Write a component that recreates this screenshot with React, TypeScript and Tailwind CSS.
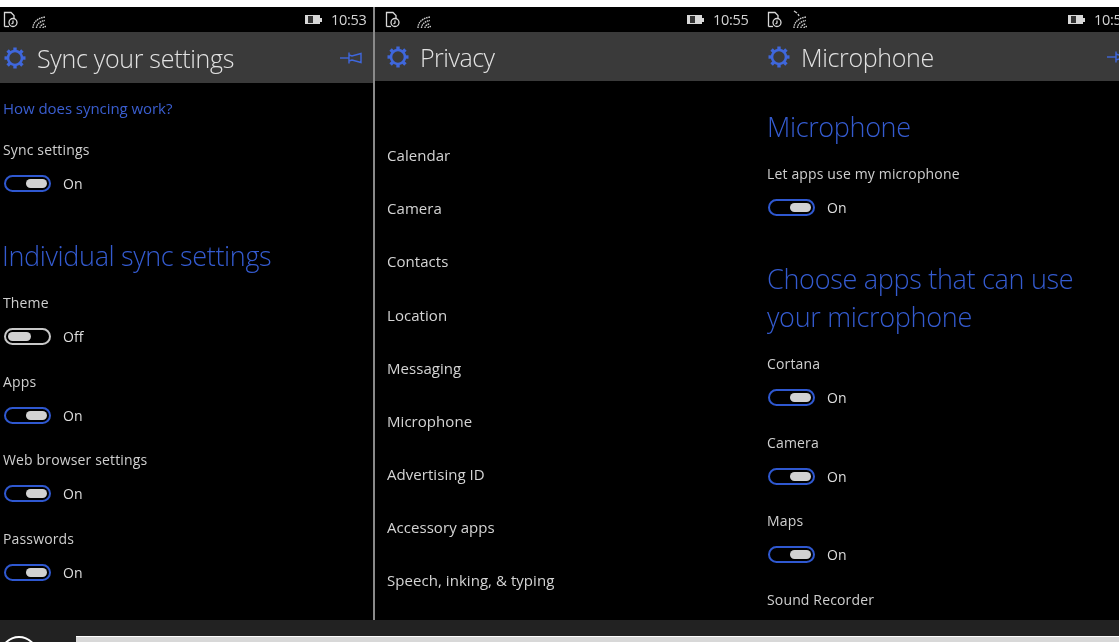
const fontFamily = 'font-["Open_Sans","Liberation_Sans",sans-serif]'

function Gear({ className }: { className?: string }) {
  const teeth = [0, 45, 90, 135, 180, 225, 270, 315]
  return (
    <svg viewBox="0 0 24 24" className={className} fill="none" stroke="#3f67dc">
      <circle cx="12" cy="12" r="7" strokeWidth="2.6" />
      {teeth.map((a) => (
        <line key={a} x1="12" y1="5" x2="12" y2="1.5" strokeWidth="3.4" transform={`rotate(${a} 12 12)`} />
      ))}
    </svg>
  )
}

function Pin({ className }: { className?: string }) {
  return (
    <svg viewBox="0 0 22 14" className={className} fill="none" stroke="#3f67dc" strokeWidth="1.4">
      <path d="M0 7H9" />
      <path d="M9 1.5V12.5M9 4L12 5L21 2.5V11.5L12 9L9 10" />
    </svg>
  )
}

function DocIcon() {
  return (
    <svg viewBox="0 0 16 16" className="h-[17px] w-[16px] shrink-0" fill="none" stroke="#d8d8d8" strokeWidth="1.3">
      <path d="M1.5 15V1H8L11 4V7" />
      <path d="M1.5 15H6" />
      <circle cx="10" cy="11" r="4" />
      <path d="M10 9V11.5L8.5 12.5" />
    </svg>
  )
}

function WifiIcon({ dot }: { dot?: boolean }) {
  return (
    <svg viewBox="0 0 16 20" className="h-5 w-4 shrink-0" fill="none" stroke="#c8c8c8" strokeWidth="1.4" strokeDasharray="1.6 .7">
      <path d="M1 18C1 12 6 8 13 7" />
      <path d="M4.5 18C4.5 14.5 8 11 13 10.5" />
      <path d="M8 18C8 16 10 14 13 14" />
      <path d="M11 18C11 17 12 16.5 14 16.5" />
      {dot && <path d="M1 1L4 3M5 4L6 6" strokeDasharray="none" />}
    </svg>
  )
}

function Battery() {
  return (
    <div className="flex items-center shrink-0">
      <div className="h-[9px] w-[15px] border border-[#d8d8d8] bg-[#d8d8d8] pr-[6px]">
        <div className="ml-auto h-full w-[5px] bg-[#333]" />
      </div>
      <div className="h-[4px] w-[2px] bg-[#d8d8d8]" />
    </div>
  )
}

function StatusBar({ time, wifiGap, dot, docLeft, timeLeft }: { time: string; wifiGap: string; dot?: boolean; docLeft: string; timeLeft: string }) {
  return (
    <div className={`flex h-[25px] items-center ${docLeft} text-[14.5px] text-[#d4d4d4]`}>
      <DocIcon />
      <div className={wifiGap}>
        <WifiIcon dot={dot} />
      </div>
      <div className={`flex items-center gap-[9px] ${timeLeft}`}>
        <Battery />
        <span className="whitespace-nowrap tracking-[-0.3px]">{time}</span>
      </div>
    </div>
  )
}

function Header({ title, pin, height, pad, textClass, pinClass }: { title: string; pin?: boolean; height: string; pad: string; textClass: string; pinClass?: string }) {
  return (
    <div className={`flex ${height} items-center bg-[#3a3a3a] ${pad}`}>
      <Gear className="h-[24px] w-[24px] shrink-0" />
      <span className={`ml-[10px] whitespace-nowrap pt-[3px] text-[#e2e2e2] ${textClass}`}>{title}</span>
      {pin && <Pin className={pinClass} />}
    </div>
  )
}

function Toggle({ on }: { on: boolean }) {
  return (
    <div className="ml-[1px] flex items-center">
      <div className={`flex h-[17px] w-[47px] items-center rounded-full border-2 px-[2px] ${on ? 'justify-end border-[#2f58d0]' : 'border-[#c8c8c8]'}`}>
        <div className={`h-[9px] rounded-full bg-[#d2d2d2] ${on ? 'w-[21px]' : 'w-[23px]'}`} />
      </div>
      <span className="ml-[12px] text-[14px] text-[#dedede]">{on ? 'On' : 'Off'}</span>
    </div>
  )
}

function Setting({ label, on = true, className }: { label: string; on?: boolean; className?: string }) {
  return (
    <div className={className}>
      <div className="h-[20px] text-[14px] leading-[20px] tracking-[0.15px] text-[#cfcfcf]">{label}</div>
      <div className="mt-[13px]">
        <Toggle on={on} />
      </div>
    </div>
  )
}

const privacyItems = ['Calendar', 'Camera', 'Contacts', 'Location', 'Messaging', 'Microphone', 'Advertising ID', 'Accessory apps', 'Speech, inking, & typing']

export default function App() {
  return (
    <div className={`${fontFamily} flex h-[642px] w-[1119px] flex-col overflow-hidden bg-white pt-[7px]`}>
      <div className="flex h-[613px] bg-black blur-[0.5px]">
        {/* sync settings */}
        <div className="w-[373px] shrink-0">
          <StatusBar time="10:53" wifiGap="ml-[13px]" docLeft="pl-[3px]" timeLeft="ml-[257px]" />
          <Header title="Sync your settings" pin height="h-[51px]" pad="pl-[3px]" textClass="text-[25px] font-light tracking-[-0.3px]" pinClass="ml-auto mr-[11px] h-[14px] w-[22px]" />
          <div className="pl-[3px]">
            <div className="mt-[15px] h-[20px] text-[15px] leading-[20px] tracking-[-0.05px] text-[#3a5ed0]">How does syncing work?</div>
            <Setting label="Sync settings" className="mt-[22px]" />
            <div className="-ml-[1px] mt-[42px] h-[40px] text-[27px] font-light leading-[40px] tracking-[-0.35px] text-[#345bd0]">Individual sync settings</div>
            <Setting label="Theme" on={false} className="mt-[17px]" />
            <Setting label="Apps" className="mt-[25px]" />
            <Setting label="Web browser settings" className="mt-[24px]" />
            <Setting label="Passwords" className="mt-[25px]" />
          </div>
        </div>
        <div className="w-[2px] shrink-0 bg-[#8a8a8a]" />

        {/* privacy */}
        <div className="w-[381px] shrink-0">
          <StatusBar time="10:55" wifiGap="ml-[16px]" docLeft="pl-[10px]" timeLeft="ml-[254px]" />
          <Header title="Privacy" height="h-[49px]" pad="pl-[11px]" textClass="text-[25px] tracking-[-0.5px] font-light" />
          <div className="flex flex-col pl-[12px] pt-[48px]">
            {privacyItems.map((item) => (
              <div key={item} className="flex h-[53.1px] items-center text-[15px] tracking-[0.05px] text-[#d4d4d4]">
                {item}
              </div>
            ))}
          </div>
        </div>

        {/* microphone */}
        <div className="min-w-0 flex-1 overflow-hidden">
          <StatusBar time="10:55" wifiGap="ml-[10px]" dot docLeft="pl-[11px]" timeLeft="ml-[259px]" />
          <Header title="Microphone" pin height="h-[49px]" pad="pl-[11px]" textClass="text-[25px] font-light tracking-[-0.35px]" pinClass="ml-[173px] h-[14px] w-[22px] shrink-0" />
          <div className="pl-[11px]">
            <div className="mt-[26px] h-[40px] text-[27px] font-light leading-[40px] tracking-[-0.35px] text-[#345bd0]">Microphone</div>
            <Setting label="Let apps use my microphone" className="mt-[17px]" />
            <div className="mt-[42px] w-[330px] text-[27px] font-light leading-[38px] tracking-[-0.3px] text-[#345bd0]">
              Choose apps that can use your microphone
            </div>
            <Setting label="Cortana" className="mt-[18px]" />
            <Setting label="Camera" className="mt-[25px]" />
            <Setting label="Maps" className="mt-[24px]" />
            <div className="mt-[25px] h-[20px] text-[14px] leading-[20px] tracking-[0.15px] text-[#cfcfcf]">Sound Recorder</div>
          </div>
        </div>
      </div>

      {/* browser chrome strip at the bottom */}
      <div className="flex min-h-0 flex-1 items-start bg-[#222] pt-[16px]">
        <div className="h-[38px] w-[38px] shrink-0 rounded-full border-2 border-white bg-[#222]" />
        <div className="ml-[38px] h-[10px] flex-1 border-t border-white bg-[#d8d8d8]" />
      </div>
    </div>
  )
}
